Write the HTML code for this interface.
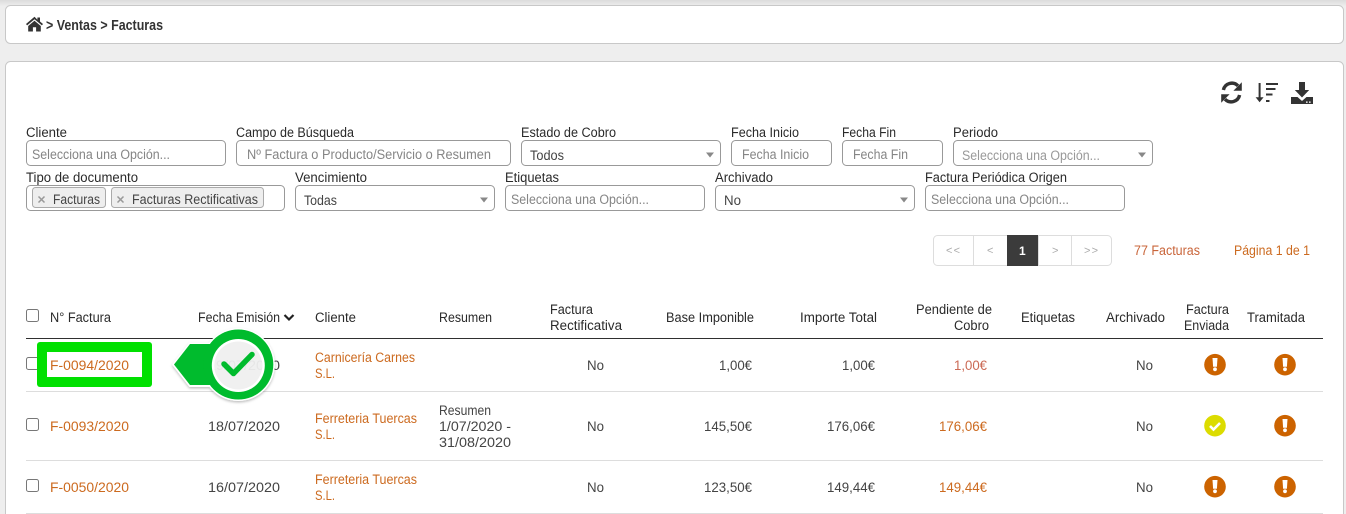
<!DOCTYPE html>
<html lang="es"><head><meta charset="utf-8"><title>Facturas</title>
<style>
html,body{margin:0;padding:0;background:#eee;width:1346px;height:514px;overflow:hidden}
svg{display:block}
text{font-family:"Liberation Sans",Arial,sans-serif;font-size:13.5px;fill:#3a3a3a}
.l{fill:#2a2a2a}
.p{fill:#858585}
.q{fill:#999}
.v{fill:#444}
.o{fill:#cc6a1f}
.r{fill:#cb6a55}
.b{fill:none;stroke:#999;stroke-width:1}
.g{fill:#aaa;font-size:11px}
</style></head><body>
<svg width="1346" height="514" viewBox="0 0 1346 514" xmlns="http://www.w3.org/2000/svg">
<defs>
<linearGradient id="t" x1="0" y1="0" x2="0" y2="1"><stop offset="0" stop-color="#dcdcdc"/><stop offset="1" stop-color="#eee"/></linearGradient>
<filter id="s" x="-20%" y="-20%" width="140%" height="140%"><feDropShadow dx="0" dy="1.5" stdDeviation="1.2" flood-color="#000" flood-opacity=".25"/></filter>
<clipPath id="d"><circle cx="238.3" cy="365.5" r="24"/></clipPath>
</defs>
<rect width="1346" height="514" fill="#eee"/>
<rect width="1346" height="6" fill="url(#t)"/>
<rect x="5.5" y="5.5" width="1338" height="38" rx="5" fill="#fff" stroke="#c8c8c8"/>
<rect x="5.5" y="61.5" width="1338" height="470" rx="5" fill="#fff" stroke="#c8c8c8"/>

<!-- breadcrumb -->
<path d="M34.500 16.800 26 24l1.100 1.400 7.400-6.200 7.400 6.200 1.100-1.400-3-2.500V17.500h-2.600v2.300z" fill="#333"/>
<path d="M28.200 26l6.300-5.200 6.300 5.200v5.500h-4.700v-4.200h-3.200v4.200h-4.700z" fill="#333"/>
<text x="46" y="30" textLength="117" lengthAdjust="spacingAndGlyphs" style="font-weight:bold;font-size:14.5px;fill:#333">&gt; Ventas &gt; Facturas</text>

<!-- toolbar icons -->
<g fill="none" stroke="#333" stroke-width="3.4">
<path d="M1223.400 90a8.600 8.600 0 0 1 14.600-4.200"/>
<path d="M1239.600 95a8.600 8.600 0 0 1-14.600 4.200"/>
</g>
<path d="M1241.800 82.300v8.400h-8.400zM1221.200 102.700v-8.400h8.400z" fill="#333"/>
<path d="M1258.600 83h2v14.300h3l-4 5-4-5h3z" fill="#333"/>
<path d="M1266 83h12v2h-12zM1266 88h9.500v2h-9.500zM1266 93.500h6.500v2h-6.500zM1266 100h3.500v2h-3.500z" fill="#333"/>
<path d="M1299 82h6v8h4.200l-7.200 7.500-7.200-7.500h4.200z" fill="#333"/>
<path d="M1291 97h6.500l4.500 4 4.500-4h6.500v7h-22z" fill="#333"/>
<rect x="1306" y="101.500" width="1.600" height="1.300" fill="#fff"/><rect x="1309" y="101.500" width="1.600" height="1.300" fill="#fff"/>

<!-- filter labels -->
<text class="l" x="26" y="137" textLength="41" lengthAdjust="spacingAndGlyphs">Cliente</text>
<text class="l" x="236" y="137" textLength="118" lengthAdjust="spacingAndGlyphs">Campo de Búsqueda</text>
<text class="l" x="521" y="137" textLength="95" lengthAdjust="spacingAndGlyphs">Estado de Cobro</text>
<text class="l" x="731" y="137" textLength="68" lengthAdjust="spacingAndGlyphs">Fecha Inicio</text>
<text class="l" x="842" y="137" textLength="54" lengthAdjust="spacingAndGlyphs">Fecha Fin</text>
<text class="l" x="953" y="137" textLength="45" lengthAdjust="spacingAndGlyphs">Periodo</text>
<text class="l" x="26" y="182" textLength="112" lengthAdjust="spacingAndGlyphs">Tipo de documento</text>
<text class="l" x="295" y="182" textLength="72" lengthAdjust="spacingAndGlyphs">Vencimiento</text>
<text class="l" x="505" y="182" textLength="54" lengthAdjust="spacingAndGlyphs">Etiquetas</text>
<text class="l" x="715" y="182" textLength="58" lengthAdjust="spacingAndGlyphs">Archivado</text>
<text class="l" x="925" y="182" textLength="142" lengthAdjust="spacingAndGlyphs">Factura Periódica Origen</text>

<!-- inputs -->
<rect class="b" x="26.500" y="140.500" width="199" height="25" rx="4"/>
<rect class="b" x="236.500" y="140.500" width="274" height="25" rx="4"/>
<rect class="b" x="521.500" y="140.500" width="199" height="25" rx="4"/>
<rect class="b" x="731.500" y="140.500" width="100" height="25" rx="4"/>
<rect class="b" x="842.500" y="140.500" width="100" height="25" rx="4"/>
<rect class="b" x="953.500" y="140.500" width="199" height="25" rx="4"/>
<rect class="b" x="26.500" y="185.500" width="258" height="25" rx="4"/>
<rect class="b" x="295.500" y="185.500" width="199" height="25" rx="4"/>
<rect class="b" x="505.500" y="185.500" width="199" height="25" rx="4"/>
<rect class="b" x="715.500" y="185.500" width="199" height="25" rx="4"/>
<rect class="b" x="925.500" y="185.500" width="199" height="25" rx="4"/>

<text class="p" x="32" y="159" textLength="138" lengthAdjust="spacingAndGlyphs">Selecciona una Opción...</text>
<text class="p" x="247" y="159" textLength="244" lengthAdjust="spacingAndGlyphs">Nº Factura o Producto/Servicio o Resumen</text>
<text class="v" x="530" y="160" textLength="34" lengthAdjust="spacingAndGlyphs">Todos</text>
<text class="p" x="742" y="159" textLength="67" lengthAdjust="spacingAndGlyphs">Fecha Inicio</text>
<text class="p" x="853" y="159" textLength="55" lengthAdjust="spacingAndGlyphs">Fecha Fin</text>
<text class="q" x="962" y="160" textLength="138" lengthAdjust="spacingAndGlyphs">Selecciona una Opción...</text>
<text class="v" x="304" y="205" textLength="33" lengthAdjust="spacingAndGlyphs">Todas</text>
<text class="p" x="511" y="204" textLength="138" lengthAdjust="spacingAndGlyphs">Selecciona una Opción...</text>
<text class="v" x="724" y="205" textLength="17" lengthAdjust="spacingAndGlyphs">No</text>
<text class="p" x="931" y="204" textLength="138" lengthAdjust="spacingAndGlyphs">Selecciona una Opción...</text>

<path d="M706 152.500h8l-4 5zM1138 152.500h8l-4 5zM480 197.500h8l-4 5zM900 197.500h8l-4 5z" fill="#888"/>

<!-- tags -->
<rect x="32.500" y="187.500" width="73" height="20" rx="3" fill="#eee" stroke="#aaa"/>
<rect x="111.500" y="187.500" width="152" height="20" rx="3" fill="#eee" stroke="#aaa"/>
<path d="M38.500 196.500l6 6M44.500 196.500l-6 6M117.500 196.500l6 6M123.500 196.500l-6 6" stroke="#999" stroke-width="1.500" fill="none"/>
<text class="v" x="53" y="204" textLength="47" lengthAdjust="spacingAndGlyphs">Facturas</text>
<text class="v" x="132" y="204" textLength="126" lengthAdjust="spacingAndGlyphs">Facturas Rectificativas</text>

<!-- pagination -->
<rect x="933.500" y="235.500" width="178" height="30" rx="4" fill="#fff" stroke="#ddd"/>
<path d="M973.500 236v29M1038.500 236v29M1071.500 236v29" stroke="#ddd"/>
<rect x="1007" y="235" width="31" height="31" fill="#3b3b3b"/>
<text class="g" x="946" y="254" textLength="14" lengthAdjust="spacing">&lt;&lt;</text>
<text class="g" x="987" y="254" textLength="6">&lt;</text>
<text x="1019" y="255" style="fill:#fff;font-weight:bold;font-size:12px">1</text>
<text class="g" x="1052" y="254" textLength="6">&gt;</text>
<text class="g" x="1084" y="254" textLength="14" lengthAdjust="spacing">&gt;&gt;</text>
<text x="1134" y="255" textLength="66" lengthAdjust="spacingAndGlyphs" style="fill:#c9653a">77 Facturas</text>
<text class="o" x="1234" y="255" textLength="76" lengthAdjust="spacingAndGlyphs">Página 1 de 1</text>

<!-- table header -->
<rect class="b" x="26.500" y="309.500" width="12" height="12" rx="2" style="stroke:#777"/>
<text class="l" x="50" y="322" textLength="61" lengthAdjust="spacingAndGlyphs">N° Factura</text>
<text class="l" x="198" y="322" textLength="82" lengthAdjust="spacingAndGlyphs">Fecha Emisión</text>
<path d="M284.500 315l4.500 4.500 4.500-4.500" fill="none" stroke="#222" stroke-width="2.200"/>
<text class="l" x="315" y="322" textLength="41" lengthAdjust="spacingAndGlyphs">Cliente</text>
<text class="l" x="439" y="322" textLength="53" lengthAdjust="spacingAndGlyphs">Resumen</text>
<text class="l" x="550" y="314" textLength="43" lengthAdjust="spacingAndGlyphs">Factura</text>
<text class="l" x="550" y="330" textLength="72" lengthAdjust="spacingAndGlyphs">Rectificativa</text>
<text class="l" x="666" y="322" textLength="88" lengthAdjust="spacingAndGlyphs">Base Imponible</text>
<text class="l" x="800" y="322" textLength="77" lengthAdjust="spacingAndGlyphs">Importe Total</text>
<text class="l" x="916" y="314" textLength="76" lengthAdjust="spacingAndGlyphs">Pendiente de</text>
<text class="l" x="954" y="330" textLength="35" lengthAdjust="spacingAndGlyphs">Cobro</text>
<text class="l" x="1021" y="322" textLength="54" lengthAdjust="spacingAndGlyphs">Etiquetas</text>
<text class="l" x="1106" y="322" textLength="59" lengthAdjust="spacingAndGlyphs">Archivado</text>
<text class="l" x="1186" y="314" textLength="43" lengthAdjust="spacingAndGlyphs">Factura</text>
<text class="l" x="1184" y="330" textLength="45" lengthAdjust="spacingAndGlyphs">Enviada</text>
<text class="l" x="1247" y="322" textLength="58" lengthAdjust="spacingAndGlyphs">Tramitada</text>

<rect x="26" y="338" width="1297" height="1" fill="#2f2f2f"/>
<rect x="26" y="391" width="1297" height="1" fill="#ddd"/>
<rect x="26" y="460" width="1297" height="1" fill="#ddd"/>
<rect x="26" y="513" width="1297" height="1" fill="#ddd"/>

<!-- row 1 -->
<rect class="b" x="26.500" y="357.500" width="12" height="12" rx="2" style="stroke:#777"/>
<text class="v" x="208" y="370" textLength="72" lengthAdjust="spacingAndGlyphs">19/07/2020</text>
<text class="o" x="315" y="362" textLength="100" lengthAdjust="spacingAndGlyphs">Carnicería Carnes</text>
<text class="o" x="315" y="378" textLength="20" lengthAdjust="spacingAndGlyphs">S.L.</text>
<text class="v" x="587" y="370" textLength="17" lengthAdjust="spacingAndGlyphs">No</text>
<text class="v" x="719" y="370" textLength="33" lengthAdjust="spacingAndGlyphs">1,00€</text>
<text class="v" x="842" y="370" textLength="33" lengthAdjust="spacingAndGlyphs">1,00€</text>
<text class="r" x="954" y="370" textLength="33" lengthAdjust="spacingAndGlyphs">1,00€</text>
<text class="v" x="1136" y="370" textLength="17" lengthAdjust="spacingAndGlyphs">No</text>

<!-- row 2 -->
<rect class="b" x="26.500" y="418.500" width="12" height="12" rx="2" style="stroke:#777"/>
<text class="o" x="50" y="431" textLength="79" lengthAdjust="spacingAndGlyphs">F-0093/2020</text>
<text class="v" x="208" y="431" textLength="72" lengthAdjust="spacingAndGlyphs">18/07/2020</text>
<text class="o" x="315" y="423" textLength="102" lengthAdjust="spacingAndGlyphs">Ferreteria Tuercas</text>
<text class="o" x="315" y="439" textLength="20" lengthAdjust="spacingAndGlyphs">S.L.</text>
<text class="v" x="439" y="415" textLength="52" lengthAdjust="spacingAndGlyphs">Resumen</text>
<text class="v" x="439" y="431" textLength="72" lengthAdjust="spacingAndGlyphs">1/07/2020 -</text>
<text class="v" x="439" y="447" textLength="72" lengthAdjust="spacingAndGlyphs">31/08/2020</text>
<text class="v" x="587" y="431" textLength="17" lengthAdjust="spacingAndGlyphs">No</text>
<text class="v" x="704" y="431" textLength="48" lengthAdjust="spacingAndGlyphs">145,50€</text>
<text class="v" x="827" y="431" textLength="48" lengthAdjust="spacingAndGlyphs">176,06€</text>
<text class="o" x="939" y="431" textLength="48" lengthAdjust="spacingAndGlyphs">176,06€</text>
<text class="v" x="1136" y="431" textLength="17" lengthAdjust="spacingAndGlyphs">No</text>

<!-- row 3 -->
<rect class="b" x="26.500" y="479.500" width="12" height="12" rx="2" style="stroke:#777"/>
<text class="o" x="50" y="492" textLength="79" lengthAdjust="spacingAndGlyphs">F-0050/2020</text>
<text class="v" x="208" y="492" textLength="72" lengthAdjust="spacingAndGlyphs">16/07/2020</text>
<text class="o" x="315" y="484" textLength="102" lengthAdjust="spacingAndGlyphs">Ferreteria Tuercas</text>
<text class="o" x="315" y="500" textLength="20" lengthAdjust="spacingAndGlyphs">S.L.</text>
<text class="v" x="587" y="492" textLength="17" lengthAdjust="spacingAndGlyphs">No</text>
<text class="v" x="704" y="492" textLength="48" lengthAdjust="spacingAndGlyphs">123,50€</text>
<text class="v" x="827" y="492" textLength="48" lengthAdjust="spacingAndGlyphs">149,44€</text>
<text class="o" x="939" y="492" textLength="48" lengthAdjust="spacingAndGlyphs">149,44€</text>
<text class="v" x="1136" y="492" textLength="17" lengthAdjust="spacingAndGlyphs">No</text>

<!-- status icons -->
<circle cx="1215" cy="364.700" r="10.800" fill="#cc6300"/><path d="M1212.500 358h5l-.6 8.800h-3.800z" fill="#fff"/><circle cx="1215" cy="369.300" r="1.900" fill="#fff"/>
<circle cx="1285" cy="364.700" r="10.800" fill="#cc6300"/><path d="M1282.500 358h5l-.6 8.800h-3.800z" fill="#fff"/><circle cx="1285" cy="369.300" r="1.900" fill="#fff"/>
<circle cx="1215" cy="425.700" r="10.800" fill="#dcdc00"/><path d="M1210 426l3.500 3.500 6.500-6.500" fill="none" stroke="#fff" stroke-width="2.600"/>
<circle cx="1285" cy="425.700" r="10.800" fill="#cc6300"/><path d="M1282.500 419h5l-.6 8.800h-3.800z" fill="#fff"/><circle cx="1285" cy="430.300" r="1.900" fill="#fff"/>
<circle cx="1215" cy="486.700" r="10.800" fill="#cc6300"/><path d="M1212.500 480h5l-.6 8.800h-3.800z" fill="#fff"/><circle cx="1215" cy="491.300" r="1.900" fill="#fff"/>
<circle cx="1285" cy="486.700" r="10.800" fill="#cc6300"/><path d="M1282.500 480h5l-.6 8.800h-3.800z" fill="#fff"/><circle cx="1285" cy="491.300" r="1.900" fill="#fff"/>

<!-- green highlight -->
<rect x="37" y="342" width="115" height="45" rx="3" fill="#00e000"/>
<rect x="47" y="352" width="95" height="25" fill="#fff"/>
<text class="o" x="50" y="370" textLength="79" lengthAdjust="spacingAndGlyphs">F-0094/2020</text>

<!-- callout -->
<g filter="url(#s)">
<path d="M172 364.500 189.500 342.500H215V387H189.500z" fill="#fff"/>
<circle cx="238.300" cy="364.500" r="36.500" fill="#fff"/>
</g>
<path d="M174 364.500 190 344H215V385H190z" fill="#00bb2d"/>
<circle cx="238.300" cy="364.500" r="35" fill="#00bb2d"/>
<circle cx="238.300" cy="365.500" r="26.500" fill="#fff"/>
<circle cx="238.300" cy="365.500" r="24" fill="#f0f0f0"/>
<text x="208" y="370" textLength="72" lengthAdjust="spacingAndGlyphs" clip-path="url(#d)" style="fill:#e6e6e6">19/07/2020</text>
<path d="M224 364l9.500 9.500 18.500-19" fill="none" stroke="#00bb2d" stroke-width="5.500" stroke-linecap="round" stroke-linejoin="round"/>
</svg>
</body></html>
